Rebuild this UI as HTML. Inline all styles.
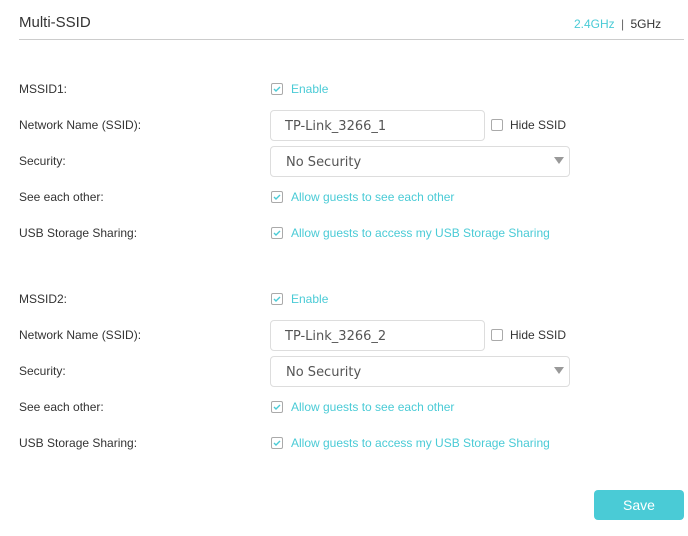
<!DOCTYPE html><html><head><style>
body{margin:0;width:688px;height:536px;background:#fff;font-family:"Liberation Sans",sans-serif;position:relative;overflow:hidden}
.a{position:absolute}
.lbl{position:absolute;left:19px;font-size:12px;color:#333;transform:translateY(-50%)}
.cb{position:absolute;left:271px;width:10px;height:10px;border:1px solid #aaa;border-radius:2px;transform:translateY(-50%)}
.cb svg{position:absolute;left:1px;top:1px}
.ct{position:absolute;left:291px;font-size:12px;color:#4acbd6;transform:translateY(-50%)}
.inp{position:absolute;left:270px;width:215px;height:31px;border:1px solid #ddd;border-radius:4px;box-sizing:border-box;font-family:"DejaVu Sans",sans-serif;font-size:13px;color:#555;padding-left:14px;line-height:31px}
.sel{position:absolute;left:270px;width:300px;height:31px;border:1px solid #ddd;border-radius:4px;box-sizing:border-box;font-family:"DejaVu Sans",sans-serif;font-size:13px;color:#555;padding-left:15px;line-height:32px}
.sel:after{content:"";position:absolute;right:5px;top:10px;border-left:5px solid transparent;border-right:5px solid transparent;border-top:7px solid #999}
</style></head><body>
<div class="a" style="left:19px;top:14px;font-size:15px;color:#333">Multi-SSID</div>
<div class="a" style="left:574px;top:17px;font-size:12px;color:#4acbd6">2.4GHz <span style="color:#666;padding:0 3px">|</span> <span style="color:#333">5GHz</span></div>
<div class="a" style="left:19px;top:39px;width:665px;height:1px;background:#ccc"></div>
<!-- block 1 -->
<div class="lbl" style="top:89px">MSSID1:</div>
<div class="cb" style="top:89px"><svg width="8" height="8"><path d="M1 4l2 2 4-4" stroke="#4acbd6" stroke-width="1.4" fill="none"/></svg></div><div class="ct" style="top:89px">Enable</div>
<div class="lbl" style="top:125px">Network Name (SSID):</div>
<div class="inp" style="top:110px">TP-Link_3266_1</div>
<div class="cb" style="left:491px;top:125px"></div><div class="ct" style="left:510px;top:125px;color:#333">Hide SSID</div>
<div class="lbl" style="top:161px">Security:</div>
<div class="sel" style="top:146px">No Security</div>
<div class="lbl" style="top:197px">See each other:</div>
<div class="cb" style="top:197px"><svg width="8" height="8"><path d="M1 4l2 2 4-4" stroke="#4acbd6" stroke-width="1.4" fill="none"/></svg></div><div class="ct" style="top:197px">Allow guests to see each other</div>
<div class="lbl" style="top:233px">USB Storage Sharing:</div>
<div class="cb" style="top:233px"><svg width="8" height="8"><path d="M1 4l2 2 4-4" stroke="#4acbd6" stroke-width="1.4" fill="none"/></svg></div><div class="ct" style="top:233px">Allow guests to access my USB Storage Sharing</div>
<!-- block 2 -->
<div class="lbl" style="top:299px">MSSID2:</div>
<div class="cb" style="top:299px"><svg width="8" height="8"><path d="M1 4l2 2 4-4" stroke="#4acbd6" stroke-width="1.4" fill="none"/></svg></div><div class="ct" style="top:299px">Enable</div>
<div class="lbl" style="top:335px">Network Name (SSID):</div>
<div class="inp" style="top:320px">TP-Link_3266_2</div>
<div class="cb" style="left:491px;top:335px"></div><div class="ct" style="left:510px;top:335px;color:#333">Hide SSID</div>
<div class="lbl" style="top:371px">Security:</div>
<div class="sel" style="top:356px">No Security</div>
<div class="lbl" style="top:407px">See each other:</div>
<div class="cb" style="top:407px"><svg width="8" height="8"><path d="M1 4l2 2 4-4" stroke="#4acbd6" stroke-width="1.4" fill="none"/></svg></div><div class="ct" style="top:407px">Allow guests to see each other</div>
<div class="lbl" style="top:443px">USB Storage Sharing:</div>
<div class="cb" style="top:443px"><svg width="8" height="8"><path d="M1 4l2 2 4-4" stroke="#4acbd6" stroke-width="1.4" fill="none"/></svg></div><div class="ct" style="top:443px">Allow guests to access my USB Storage Sharing</div>
<div class="a" style="left:594px;top:490px;width:90px;height:30px;background:#4acbd6;border-radius:4px;color:#fff;font-size:14px;text-align:center;line-height:30px">Save</div>
</body></html>
